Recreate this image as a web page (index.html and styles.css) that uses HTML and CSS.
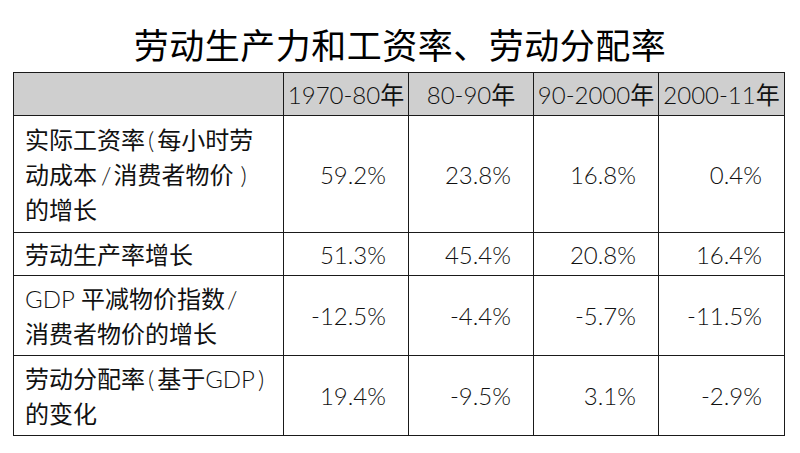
FILE: index.html
```html
<!DOCTYPE html>
<html lang="zh">
<head>
<meta charset="utf-8">
<link rel="stylesheet" href="styles.css">
</head>
<body>
<h1 class="title">劳动生产力和工资率、劳动分配率</h1>
<table class="grid">
  <colgroup>
    <col class="c-label"><col class="c-num"><col class="c-num"><col class="c-num"><col class="c-last">
  </colgroup>
  <thead>
    <tr class="row-head">
      <th></th>
      <th><span class="num">1970-80</span>年</th>
      <th><span class="num">80-90</span>年</th>
      <th><span class="num">90-2000</span>年</th>
      <th><span class="num">2000-11</span>年</th>
    </tr>
  </thead>
  <tbody>
    <tr class="row-3">
      <td class="label">实际工资率<span class="paren">(</span>每小时劳<br>动成本<span class="slash">/</span>消费者物价<span class="paren close">)</span><br>的增长</td>
      <td>59.2%</td><td>23.8%</td><td>16.8%</td><td>0.4%</td>
    </tr>
    <tr class="row-1">
      <td class="label">劳动生产率增长</td>
      <td>51.3%</td><td>45.4%</td><td>20.8%</td><td>16.4%</td>
    </tr>
    <tr class="row-2">
      <td class="label"><span class="num">GDP</span> 平减物价指数<span class="slash end">/</span><br>消费者物价的增长</td>
      <td>-12.5%</td><td>-4.4%</td><td>-5.7%</td><td>-11.5%</td>
    </tr>
    <tr class="row-2">
      <td class="label">劳动分配率<span class="paren">(</span>基于<span class="num">GDP</span><span class="paren">)</span><br>的变化</td>
      <td>19.4%</td><td>-9.5%</td><td>3.1%</td><td>-2.9%</td>
    </tr>
  </tbody>
</table>
</body>
</html>
```

FILE: styles.css
```css
html, body {
  margin: 0;
  padding: 0;
  background: #ffffff;
}
body {
  font-family: "Lato", "Noto Sans CJK SC", sans-serif;
  color: #111111;
  width: 800px;
  height: 453px;
  overflow: hidden;
}
.title {
  margin: 0;
  box-sizing: border-box;
  height: 72px;
  padding-top: 20px;
  font-family: "Noto Sans CJK SC", sans-serif;
  font-weight: 400;
  font-size: 35px;
  line-height: 48px;
  text-align: center;
  color: #000000;
  letter-spacing: 0.5px;
}
.grid {
  margin-left: 13px;
  border-collapse: collapse;
  table-layout: fixed;
  width: 771px;
  font-size: 24px;
  font-weight: 400;
  line-height: 35px;
}
.c-label { width: 270px; }
.c-num { width: 125px; }
.c-last { width: 126px; }
.grid th, .grid td {
  border: 1px solid #1a1a1a;
  padding: 0 22px 0 11px;
  white-space: nowrap;
  overflow: hidden;
}
.grid th {
  background: #cfcfcf;
  font-weight: 400;
  text-align: center;
  padding: 0;
  height: 42px;
}
.grid td {
  text-align: right;
  vertical-align: middle;
  font-weight: 300;
}
.grid td.label {
  text-align: left;
  padding: 0 4px 0 11px;
  font-weight: 400;
}
.num {
  font-weight: 300;
}
.paren {
  padding: 0 3px;
  font-weight: 300;
}
.paren.close {
  padding: 0 0 0 7px;
}
.slash {
  padding: 0 2px 0 4px;
  font-weight: 300;
}
.slash.end {
  padding: 0 0 0 2px;
}
.row-1 td { height: 42px; }
.row-2 td { height: 79px; }
.row-3 td { height: 116px; }
```
